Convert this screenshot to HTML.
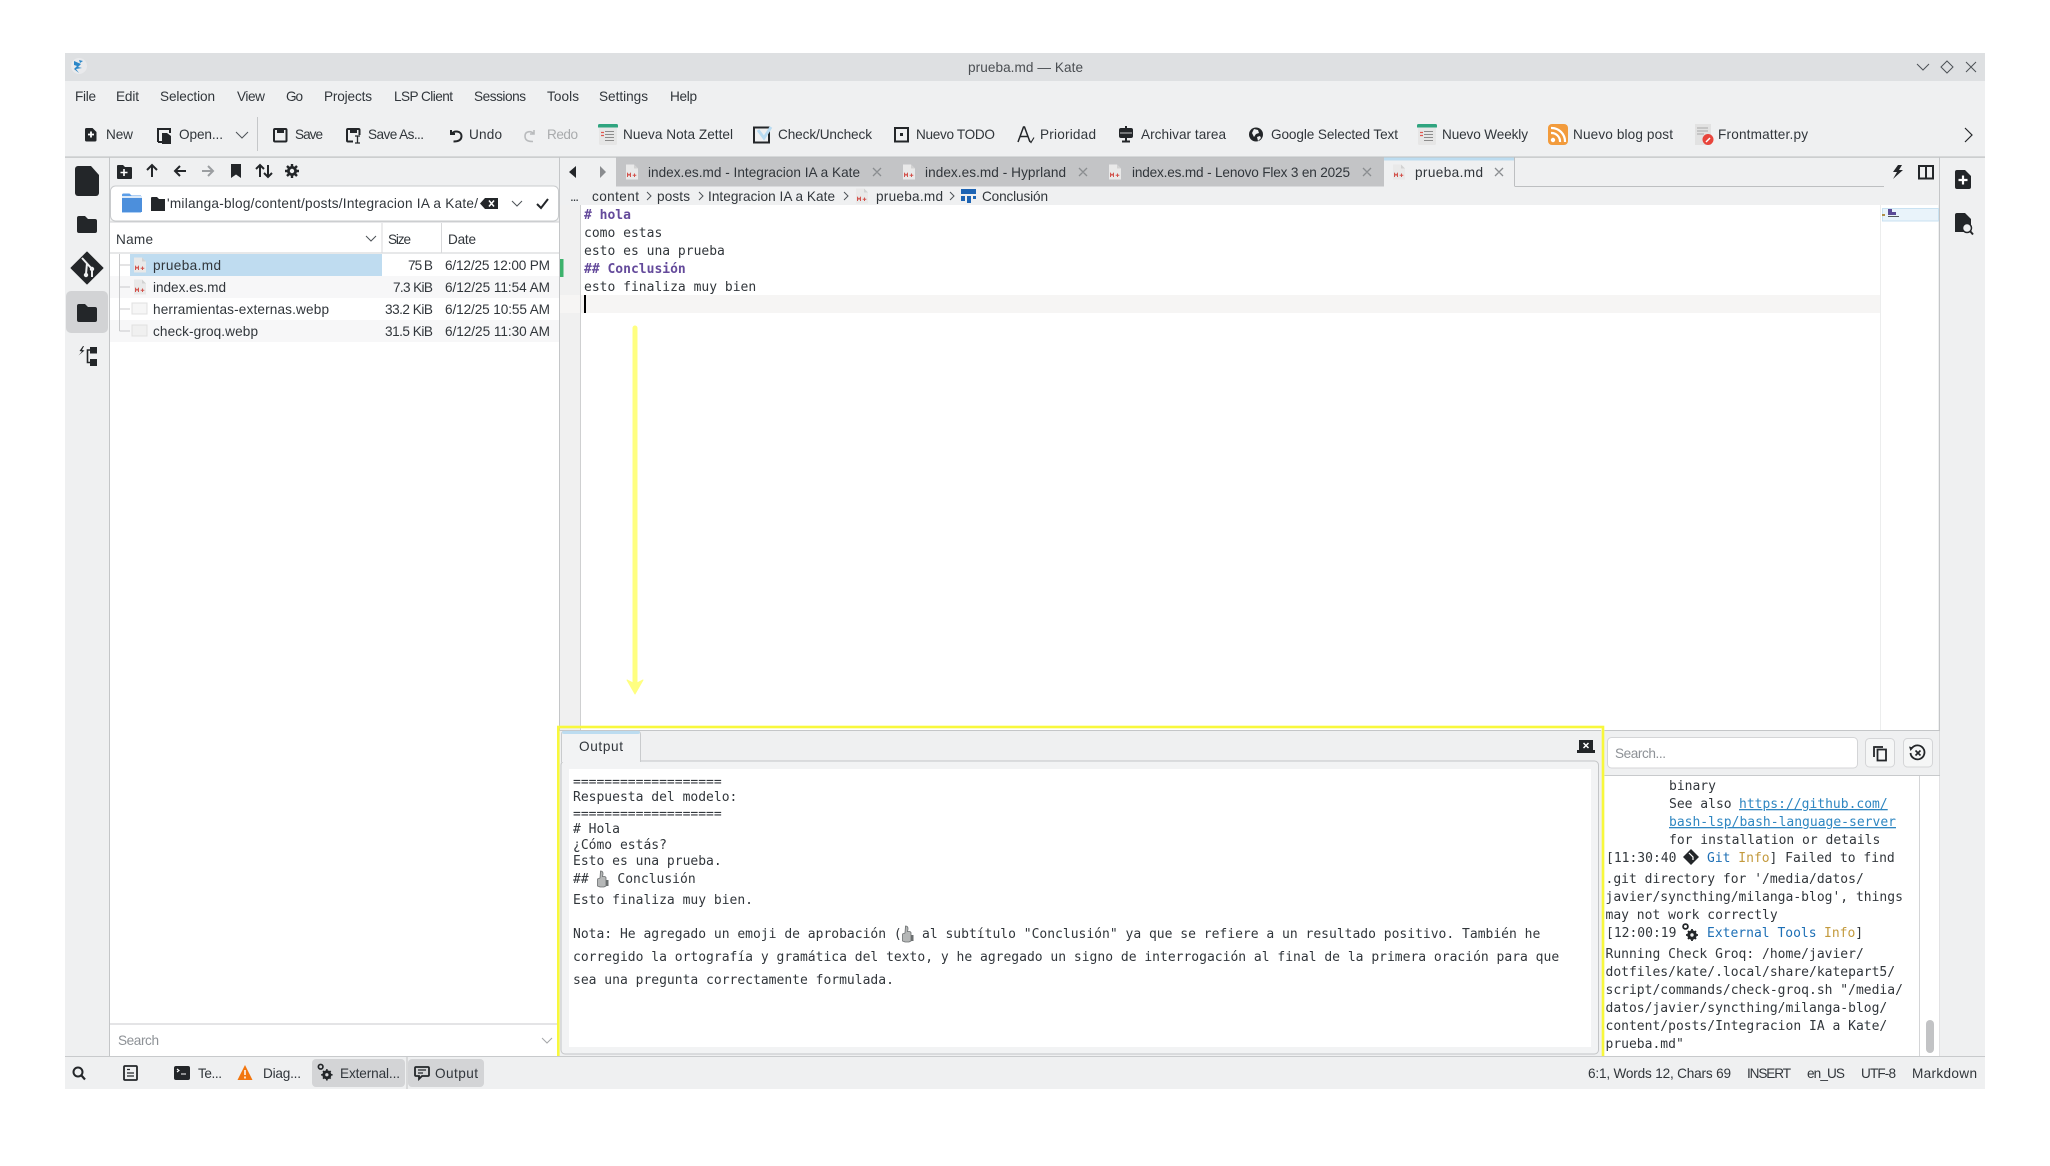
<!DOCTYPE html>
<html><head><meta charset="utf-8"><title>prueba.md — Kate</title>
<style>
html,body{margin:0;padding:0;background:#fff;width:2050px;height:1166px;overflow:hidden}
svg{display:block}
.u{font-family:"Liberation Sans",sans-serif;font-size:13.6px;fill:#31363b}
.m{font-family:"DejaVu Sans Mono","Liberation Mono",monospace;font-size:13px;fill:#31363b;white-space:pre}
.b{font-weight:bold;fill:#644a9b}
.x{stroke:#8a8d90;stroke-width:1.3;fill:none}
.k{fill:#232629}
.l{stroke:#232629;stroke-width:2;fill:none}
.c{stroke:#4d5257;stroke-width:1;fill:none}
</style></head><body>
<svg width="2050" height="1166" viewBox="0 0 2050 1166" xmlns="http://www.w3.org/2000/svg">
<defs>
<g id="md"><path d="M-6-7.500h8l4 4V7.500H-6z" fill="#e9e9e9"/><path d="M2-7.500l4 4H2z" fill="#d2d2d2"/><path d="M-4.500 5V1.500l1.500 1.800 1.500-1.800V5M2.500 1.500V5M.7 3.300h3.600" stroke="#d2524c" stroke-width="1" fill="none"/></g>
<g id="nt"><path d="M-9-10H9V9a1.500 1.500 0 0 1-1.500 1.500h-15A1.500 1.500 0 0 1-9 9z" fill="#e6e6e6"/><path d="M-10-9a1.500 1.500 0 0 1 1.500-1.500h17A1.500 1.500 0 0 1 10-9v2H-10z" fill="#2fa47f"/><path d="M-3-3H6M-3 0H6M-3 3H6M-3 6H6" stroke="#8c8c8c" stroke-width="1"/><path d="M-7-2h3M-7 1h3" stroke="#e0574f" stroke-width="1.300"/></g>
<g id="th"><path d="M-3.500 7V0l2.500-1 .5-7c2.500 0 3 2 2 5.500H4l1 1V7l-2 1H-1z" fill="#b5b7b7" stroke="#6b6f70" stroke-width=".8"/><path d="M5 1h2.500v6H5z" fill="#6b6f70"/></g>
<g id="gear"><circle cx="3" cy="4" r="4.800" fill="#232629"/><path d="M3-2v12M-3 4H9M-1 0l8 8M7 0l-8 8" stroke="#232629" stroke-width="1.800"/><circle cx="3" cy="4" r="1.700" fill="#eff0f1"/><circle cx="-3.500" cy="-4.500" r="2.400" fill="none" stroke="#232629" stroke-width="1.800"/></g>
</defs>

<!-- window -->
<rect x="65" y="53" width="1920" height="1036" fill="#eff0f1"/>
<rect x="65" y="53" width="1920" height="28" fill="#dee0e2"/>
<circle cx="79" cy="66" r="8" fill="#e9eaec"/>
<path d="M74 61l7 3-3 3 4 1-6 1 3 4-5-4 3-3-3-1zM79 60l4 1-3 2z" fill="#2b87c8"/>
<text class="u" x="968" y="72" textLength="115" lengthAdjust="spacing" style="fill:#4a4e52">prueba.md — Kate</text>
<path d="M1917 64l6 6 6-6" class="c"/><path d="M1947 61l6 6-6 6-6-6z" class="c"/><path d="M1966 62l10 10M1976 62l-10 10" class="c"/>

<!-- menu -->
<g class="u">
<text x="75" y="101" textLength="21" lengthAdjust="spacing">File</text>
<text x="116" y="101" textLength="23" lengthAdjust="spacing">Edit</text>
<text x="160" y="101" textLength="55" lengthAdjust="spacing">Selection</text>
<text x="237" y="101" textLength="28" lengthAdjust="spacing">View</text>
<text x="286" y="101" textLength="17" lengthAdjust="spacing">Go</text>
<text x="324" y="101" textLength="48" lengthAdjust="spacing">Projects</text>
<text x="394" y="101" textLength="59" lengthAdjust="spacing">LSP Client</text>
<text x="474" y="101" textLength="52" lengthAdjust="spacing">Sessions</text>
<text x="547" y="101" textLength="32" lengthAdjust="spacing">Tools</text>
<text x="599" y="101" textLength="49" lengthAdjust="spacing">Settings</text>
<text x="670" y="101" textLength="27" lengthAdjust="spacing">Help</text>
<!-- toolbar -->
<text x="106" y="139" textLength="27" lengthAdjust="spacing">New</text>
<text x="179" y="139" textLength="44" lengthAdjust="spacing">Open...</text>
<text x="295" y="139" textLength="28" lengthAdjust="spacing">Save</text>
<text x="368" y="139" textLength="56" lengthAdjust="spacing">Save As...</text>
<text x="469" y="139" textLength="33" lengthAdjust="spacing">Undo</text>
<text x="547" y="139" textLength="31" lengthAdjust="spacing" style="fill:#a9abad">Redo</text>
<text x="623" y="139" textLength="110" lengthAdjust="spacing">Nueva Nota Zettel</text>
<text x="778" y="139" textLength="94" lengthAdjust="spacing">Check/Uncheck</text>
<text x="916" y="139" textLength="79" lengthAdjust="spacing">Nuevo TODO</text>
<text x="1040" y="139" textLength="56" lengthAdjust="spacing">Prioridad</text>
<text x="1141" y="139" textLength="85" lengthAdjust="spacing">Archivar tarea</text>
<text x="1271" y="139" textLength="127" lengthAdjust="spacing">Google Selected Text</text>
<text x="1442" y="139" textLength="86" lengthAdjust="spacing">Nuevo Weekly</text>
<text x="1573" y="139" textLength="100" lengthAdjust="spacing">Nuevo blog post</text>
<text x="1718" y="139" textLength="90" lengthAdjust="spacing">Frontmatter.py</text>
</g>
<!-- toolbar icons -->
<path d="M85 129.500a1.500 1.500 0 0 1 1.500-1.500h6l4 4v8a1.500 1.500 0 0 1-1.500 1.500h-8.500a1.500 1.500 0 0 1-1.500-1.500z" class="k"/><path d="M91 131.500v6M88 134.500h6" stroke="#fff" stroke-width="1.800"/>
<path d="M158 142V129h12v4" class="l"/><path d="M162 133h5l4 3v8h-9z" class="k"/><path d="M158 142h4" class="l"/>
<path d="M236 132l6 6 6-6" class="c"/>
<rect x="257" y="117" width="1" height="34" fill="#c5c7c9"/>
<rect x="274" y="129" width="12.500" height="12.500" rx="1" class="l"/><rect x="277" y="128" width="7" height="5" class="k"/>
<rect x="347" y="129" width="12.500" height="12.500" rx="1" class="l"/><rect x="350" y="128" width="7" height="5" class="k"/><rect x="353" y="135" width="8" height="8" fill="#eff0f1"/><path d="M355 136h5M357.500 136v7M355 143h5" stroke="#232629" stroke-width="1.300" fill="none"/>
<path d="M451 130v4h4M451.500 134c3-4 10-3 10 2s-5 5.500-8 5.500" class="l"/>
<path d="M534 130v4h-4M534 134c-3-3.500-9-3-9 2s4 5.500 8 5.500" fill="none" stroke="#b9bbbd" stroke-width="1.600"/>
<use href="#nt" x="608" y="134.500"/>
<use href="#nt" x="1427" y="134.500"/>
<rect x="754" y="127.500" width="15" height="15" fill="none" stroke="#232629" stroke-width="2"/><path d="M758 130l6 8 7-11" fill="none" stroke="#b9dcf2" stroke-width="3"/>
<rect x="895" y="128" width="13" height="13.500" fill="none" stroke="#232629" stroke-width="2"/><rect x="900" y="133" width="3" height="3" class="k"/>
<path d="M1018 142l5.500-15h1l5.500 15M1020.500 136.500h7" fill="none" stroke="#232629" stroke-width="1.500"/><path d="M1029 140l2 2.500 3-5" fill="none" stroke="#232629" stroke-width="1.100"/>
<rect x="1119" y="128" width="14" height="10" rx="2" class="k"/><path d="M1126 126v16M1122 141.500h8" stroke="#232629" stroke-width="2"/><path d="M1120 133h12" stroke="#eff0f1" stroke-width=".8"/>
<circle cx="1256" cy="134.500" r="7" class="k"/><path d="M1254 129l4 1 1 3-3 1-2 3-2-4zM1257 137l3-1 1 2-3 3z" fill="#eff0f1"/>
<rect x="1548" y="124" width="20" height="21" rx="4" fill="#f29b3c"/><circle cx="1553" cy="140" r="2.200" fill="#fff"/><path d="M1551 133a8.500 8.500 0 0 1 9 9M1551 128a13.500 13.500 0 0 1 14 14" stroke="#fff" stroke-width="2.200" fill="none"/>
<rect x="1695" y="124" width="16" height="21" fill="#e2e2e2"/><path d="M1697 128h11M1697 131h11M1697 134h7" stroke="#a8a8a8"/><circle cx="1708" cy="139.500" r="5.500" fill="#e8453c"/><path d="M1706 142l4-4" stroke="#fff" stroke-width="1.500"/>
<path d="M1965 128l7 7-7 7" fill="none" stroke="#232629" stroke-width="1.200"/>
<rect x="65" y="156.500" width="1920" height="1.200" fill="#bdbfc1"/>

<!-- left sidebar -->
<rect x="109" y="157" width="1" height="899" fill="#c4c6c8"/>
<path d="M75 169a3 3 0 0 1 3-3h13l8 9v18a3 3 0 0 1-3 3H78a3 3 0 0 1-3-3z" class="k"/>
<path d="M77 218a2 2 0 0 1 2-2h6l3 3h7a2 2 0 0 1 2 2v10a2 2 0 0 1-2 2H79a2 2 0 0 1-2-2z" class="k"/>
<path d="M87 252l16 16-16 16-16-16z" class="k" stroke="#232629" stroke-width="1" stroke-linejoin="round"/><path d="M82 258l10 11v8M87 263l-1 11" stroke="#eff0f1" stroke-width="2" fill="none"/><circle cx="92" cy="269" r="2.200" fill="#eff0f1"/><circle cx="86" cy="275" r="2.200" fill="#eff0f1"/>
<rect x="66" y="291" width="42" height="42" rx="5" fill="#d2d3d5"/>
<path d="M77 306a2 2 0 0 1 2-2h6l3 3h7a2 2 0 0 1 2 2v11a2 2 0 0 1-2 2H79a2 2 0 0 1-2-2z" class="k"/>
<rect x="90" y="347" width="7" height="6.500" class="k"/><rect x="90" y="359" width="7" height="7" class="k"/><path d="M90 350h-2.500v12.500H90" fill="none" stroke="#232629" stroke-width="1.600"/><path d="M83 346l-3.500 5 2.500.5-3.500 4 6-5-2.500-.5 2-4z" class="k"/>

<!-- file panel -->
<rect x="110" y="222" width="449" height="802" fill="#fff"/>
<path d="M117 166a1 1 0 0 1 1-1h5l2 2h6a1 1 0 0 1 1 1v10a1 1 0 0 1-1 1h-13a1 1 0 0 1-1-1z" class="k"/><path d="M124 169v7M120.500 172.500h7" stroke="#fff" stroke-width="1.600"/>
<path d="M152 177v-12M147 170l5-5 5 5" class="l"/>
<path d="M186 171h-11M180 166l-5 5 5 5" class="l"/>
<path d="M202 171h11M208 166l5 5-5 5" fill="none" stroke="#9b9ea1" stroke-width="2"/>
<path d="M231 164h10v14l-5-3.500-5 3.500z" class="k"/>
<path d="M260 177v-12M256 169l4-4 4 4M268 165v12M264 173l4 4 4-4" class="l"/>
<circle cx="292" cy="171" r="5" fill="#232629"/><path d="M292 164v14M285 171h14M287 166l10 10M297 166l-10 10" stroke="#232629" stroke-width="2.400"/><circle cx="292" cy="171" r="2.200" fill="#eff0f1"/>

<rect x="110.500" y="186" width="448" height="35" rx="5" fill="#fff" stroke="#c9cbcd"/>
<path d="M122 195a1.500 1.500 0 0 1 1.500-1.500h6l2 2H141v17h-19z" fill="#5b9ee8"/><rect x="122" y="198" width="20" height="14" fill="#4c8fdc"/><rect x="122" y="196" width="20" height="2" fill="#dbe9f8"/>
<path d="M151 198a1 1 0 0 1 1-1h5l2 2h6v12h-14z" class="k"/>
<text class="u" x="167" y="208" textLength="311" lengthAdjust="spacing">'milanga-blog/content/posts/Integracion IA a Kate/</text>
<path d="M485 198h13v11h-13l-5-5.500z" class="k"/><path d="M489 200.500l5 6M494 200.500l-5 6" stroke="#fff" stroke-width="1.500"/>
<path d="M512 201l5 5 5-5" class="c"/>
<path d="M537 204l4 4 7-9" fill="none" stroke="#232629" stroke-width="2"/>

<rect x="110" y="221.500" width="449" height="1" fill="#d0d2d4"/>
<rect x="110" y="252.500" width="449" height="1" fill="#cfd1d3"/>
<rect x="381.500" y="223" width="1" height="30" fill="#d8d9db"/><rect x="441" y="223" width="1" height="30" fill="#d8d9db"/>
<text class="u" x="116" y="244" textLength="37" lengthAdjust="spacing">Name</text>
<path d="M366 236l5 5 5-5" class="c"/>
<text class="u" x="388" y="244" textLength="23" lengthAdjust="spacing">Size</text>
<text class="u" x="448" y="244" textLength="28" lengthAdjust="spacing">Date</text>
<rect x="110" y="276" width="449" height="22" fill="#f7f7f8"/>
<rect x="110" y="320" width="449" height="22" fill="#f7f7f8"/>
<rect x="130" y="254" width="252" height="22" fill="#bfdcf0"/>
<path d="M119.500 254v77M119.500 265H130M119.500 287H130M119.500 309H130M119.500 331H130" stroke="#c8c9cb" fill="none"/>
<use href="#md" x="140" y="265"/><use href="#md" x="140" y="287"/>
<rect x="132" y="303" width="15" height="11" fill="#f6f6f6" stroke="#e0e0e0"/><rect x="132" y="325" width="15" height="11" fill="#f0f0f0" stroke="#e0e0e0"/>
<g class="u">
<text x="153" y="270" textLength="68" lengthAdjust="spacing">prueba.md</text>
<text x="153" y="292" textLength="73" lengthAdjust="spacing">index.es.md</text>
<text x="153" y="314" textLength="176" lengthAdjust="spacing">herramientas-externas.webp</text>
<text x="153" y="336" textLength="105" lengthAdjust="spacing">check-groq.webp</text>
<text x="408" y="270" textLength="25" lengthAdjust="spacing">75 B</text>
<text x="393" y="292" textLength="40" lengthAdjust="spacing">7.3 KiB</text>
<text x="385" y="314" textLength="48" lengthAdjust="spacing">33.2 KiB</text>
<text x="385" y="336" textLength="48" lengthAdjust="spacing">31.5 KiB</text>
<text x="445" y="270" textLength="105" lengthAdjust="spacing">6/12/25 12:00 PM</text>
<text x="445" y="292" textLength="105" lengthAdjust="spacing">6/12/25 11:54 AM</text>
<text x="445" y="314" textLength="105" lengthAdjust="spacing">6/12/25 10:55 AM</text>
<text x="445" y="336" textLength="105" lengthAdjust="spacing">6/12/25 11:30 AM</text>
</g>
<rect x="110" y="1024" width="449" height="32" fill="#fff"/>
<rect x="110" y="1023.500" width="449" height="1" fill="#c8cacc"/>
<text class="u" x="118" y="1045" textLength="41" lengthAdjust="spacing" style="fill:#8d9196">Search</text>
<path d="M542 1038l5 5 5-5" class="c" style="stroke:#a4a6a8"/>

<!-- tabs -->
<rect x="559" y="157" width="1" height="573" fill="#c4c6c8"/>
<path d="M569 172l7-6v12z" class="k"/><path d="M606 172l-6-6v12z" fill="#8a8c8f"/>
<rect x="616" y="157.500" width="768" height="29" fill="#c3c4c6"/>
<rect x="1384" y="157.500" width="130" height="29" fill="#eff0f1"/>
<rect x="1384" y="157.500" width="130" height="3" fill="#bcdcf0"/>
<rect x="1514" y="157.500" width="1" height="29" fill="#bdbfc1"/>
<rect x="1515" y="186" width="369" height="1" fill="#bdbfc1"/>
<use href="#md" x="632" y="172"/><use href="#md" x="909" y="172"/><use href="#md" x="1115" y="172"/><use href="#md" x="1399" y="172"/>
<g class="u">
<text x="648" y="177" textLength="212" lengthAdjust="spacing">index.es.md - Integracion IA a Kate</text>
<text x="925" y="177" textLength="141" lengthAdjust="spacing">index.es.md - Hyprland</text>
<text x="1132" y="177" textLength="218" lengthAdjust="spacing">index.es.md - Lenovo Flex 3 en 2025</text>
<text x="1415" y="177" textLength="68" lengthAdjust="spacing">prueba.md</text>
</g>
<path class="x" d="M873 168l8 8M881 168l-8 8M1079 168l8 8M1087 168l-8 8M1363 168l8 8M1371 168l-8 8M1495 168l8 8M1503 168l-8 8"/>
<path d="M1898 165l-5 7h4l-4 7 10-9h-4l3-5z" class="k"/>
<rect x="1919" y="166" width="14" height="12.500" fill="none" stroke="#232629" stroke-width="2"/><path d="M1926 166v13" stroke="#232629" stroke-width="2"/>

<!-- breadcrumb -->
<g class="u">
<text x="570" y="201" textLength="9" lengthAdjust="spacing">...</text>
<text x="592" y="201" textLength="47" lengthAdjust="spacing">content</text>
<text x="657" y="201" textLength="33" lengthAdjust="spacing">posts</text>
<text x="708" y="201" textLength="127" lengthAdjust="spacing">Integracion IA a Kate</text>
<text x="876" y="201" textLength="67" lengthAdjust="spacing">prueba.md</text>
<text x="982" y="201" textLength="66" lengthAdjust="spacing">Conclusión</text>
</g>
<path class="c" d="M647 192l4 4-4 4M699 192l4 4-4 4M844 192l4 4-4 4M950 192l4 4-4 4"/>
<use href="#md" x="862" y="196"/>
<path d="M961 189h15v5h-15zM961 196h4v5h-4zM967 196h4v7h-4zM973 196h3v3h-3z" fill="#1d64b4"/>

<!-- editor -->
<rect x="560" y="205" width="20" height="525" fill="#f0f0f0"/>
<rect x="580" y="205" width="1358" height="525" fill="#fff"/>
<rect x="580" y="205" width="1" height="525" fill="#cfd0d1"/>
<rect x="560" y="295" width="20" height="18" fill="#f6f5f4"/>
<rect x="581" y="295" width="1299" height="18" fill="#f6f5f4"/>
<rect x="560" y="259" width="3.500" height="18" fill="#3db26c"/>
<text class="m b" x="584" y="219"># hola</text>
<text class="m" x="584" y="237">como estas</text>
<text class="m" x="584" y="255">esto es una prueba</text>
<text class="m b" x="584" y="273">## Conclusión</text>
<text class="m" x="584" y="291">esto finaliza muy bien</text>
<rect x="584" y="295" width="2" height="18" fill="#000"/>
<!-- minimap -->
<rect x="1880" y="205" width="1" height="525" fill="#eceded"/>
<rect x="1882.500" y="208.500" width="56" height="12.500" fill="#e9f3fa" stroke="#c9e2f2"/>
<rect x="1882" y="214" width="3" height="2" fill="#b09048"/>
<path d="M1888 209h4v3h4v3h-8z" fill="#5b4a96"/><rect x="1888" y="216" width="11" height="1" fill="#55585b"/>
<rect x="1939" y="157" width="1" height="899" fill="#c4c6c8"/>
<path d="M1955 172a2 2 0 0 1 2-2h8l6 6v11a2 2 0 0 1-2 2h-12a2 2 0 0 1-2-2z" class="k"/><path d="M1963 175.500v9M1958.500 180h9" stroke="#fff" stroke-width="2.200"/>
<path d="M1955 215a2 2 0 0 1 2-2h8l6 6v11a2 2 0 0 1-2 2h-14z" class="k"/><circle cx="1967" cy="228" r="4.500" fill="#eff0f1" stroke="#232629" stroke-width="1.500"/><path d="M1970 231l3 3.500" stroke="#232629" stroke-width="2"/>

<!-- arrow -->
<path d="M635 328V688" stroke="#ffff80" stroke-width="5" stroke-linecap="round"/>
<path d="M627 680l8 4 8-4-8 14z" fill="#ffff80" stroke="#ffff80" stroke-width="1" stroke-linejoin="round"/>

<!-- output panel -->
<rect x="559" y="730" width="1042" height="326" fill="#eff0f1"/>
<rect x="559" y="730" width="1042" height="1" fill="#c4c6c8"/>
<rect x="561" y="761" width="1037.500" height="293" rx="4" fill="#f2f3f4" stroke="#c3c5c7"/>
<rect x="561.500" y="731" width="79" height="31" fill="#f2f3f4"/>
<path d="M561.500 762V734a3 3 0 0 1 3-3h73a3 3 0 0 1 3 3v28" fill="none" stroke="#c9cbcd"/>
<rect x="562" y="731" width="78" height="3" rx="2" fill="#bcdcf0"/>
<text class="u" x="579" y="751" textLength="44" lengthAdjust="spacing">Output</text>
<rect x="569" y="769" width="1022" height="278" fill="#fff"/>
<path d="M1579 740h14v10h2v3h-18v-3h2z" class="k"/><path d="M1583.500 743l5 5M1588.500 743l-5 5" stroke="#fff" stroke-width="1.500"/>
<g class="m">
<text x="573" y="786">===================</text>
<text x="573" y="801">Respuesta del modelo:</text>
<text x="573" y="818">===================</text>
<text x="573" y="833"># Hola</text>
<text x="573" y="849">¿Cómo estás?</text>
<text x="573" y="865">Esto es una prueba.</text>
<text x="573" y="883">##</text>
<text x="617.400" y="883">Conclusión</text>
<text x="573" y="904">Esto finaliza muy bien.</text>
<text x="573" y="938">Nota: He agregado un emoji de aprobación (</text>
<text x="922" y="938">al subtítulo "Conclusión" ya que se refiere a un resultado positivo. También he</text>
<text x="573" y="961">corregido la ortografía y gramática del texto, y he agregado un signo de interrogación al final de la primera oración para que</text>
<text x="573" y="984">sea una pregunta correctamente formulada.</text>
</g>
<use href="#th" x="601" y="879"/><use href="#th" x="906" y="934"/>
<!-- yellow frame -->
<rect x="558.300" y="727" width="1044.700" height="330.500" fill="none" stroke="#f8f83c" stroke-width="2.600"/>

<!-- right panel -->
<rect x="1604.500" y="731" width="335" height="44" fill="#eff0f1"/>
<rect x="1604.500" y="730" width="335" height="1" fill="#c4c6c8"/>
<rect x="1607.500" y="737.500" width="250" height="30.500" rx="4" fill="#fff" stroke="#d4d5d7"/>
<text class="u" x="1615" y="758" textLength="51" lengthAdjust="spacing" style="fill:#8d9196">Search...</text>
<rect x="1865.500" y="738.500" width="29" height="28.500" rx="4" fill="#f5f6f6" stroke="#d4d5d7"/>
<rect x="1903.500" y="738.500" width="29" height="28.500" rx="4" fill="#f5f6f6" stroke="#d4d5d7"/>
<path d="M1875.500 747h-1.500v10" fill="none" stroke="#232629" stroke-width="1.800"/><rect x="1877.500" y="749.500" width="8.500" height="11" fill="none" stroke="#232629" stroke-width="1.800"/><path d="M1875 747h8" stroke="#232629" stroke-width="1.800"/>
<path d="M1912 748a7 7 0 1 1-1.500 5" fill="none" stroke="#232629" stroke-width="1.800"/><path d="M1915.500 750.500l5 5M1920.500 750.500l-5 5" stroke="#232629" stroke-width="1.600"/><path d="M1909 746.500l4.500 1-3 3.500z" class="k"/>
<rect x="1604.500" y="775" width="335" height="281" fill="#fff"/>
<rect x="1604.500" y="775" width="335" height="1" fill="#c8cacc"/>
<rect x="1919" y="776" width="1" height="280" fill="#d4d5d7"/>
<rect x="1926" y="1020" width="8" height="33" rx="4" fill="#c2c3c5"/>
<g class="m">
<text x="1669" y="790">binary</text>
<text x="1669" y="808">See also</text>
<text x="1739" y="808" style="fill:#2e86c1;text-decoration:underline">https://github.com/</text>
<text x="1669" y="826" style="fill:#2e86c1;text-decoration:underline">bash-lsp/bash-language-server</text>
<text x="1669" y="844">for installation or details</text>
<text x="1606" y="862">[11:30:40</text>
<text x="1707" y="862" style="fill:#1d6fb5">Git</text>
<text x="1738.300" y="862" style="fill:#c39a3d">Info</text>
<text x="1769.500" y="862">] Failed to find</text>
<text x="1605.500" y="883">.git directory for '/media/datos/</text>
<text x="1605.500" y="901">javier/syncthing/milanga-blog', things</text>
<text x="1605.500" y="919">may not work correctly</text>
<text x="1606" y="937">[12:00:19</text>
<text x="1707" y="937" style="fill:#1d6fb5">External Tools</text>
<text x="1824" y="937" style="fill:#c39a3d">Info</text>
<text x="1855.200" y="937">]</text>
<text x="1605.500" y="958">Running Check Groq: /home/javier/</text>
<text x="1605.500" y="976">dotfiles/kate/.local/share/katepart5/</text>
<text x="1605.500" y="994">script/commands/check-groq.sh "/media/</text>
<text x="1605.500" y="1012">datos/javier/syncthing/milanga-blog/</text>
<text x="1605.500" y="1030">content/posts/Integracion IA a Kate/</text>
<text x="1605.500" y="1048">prueba.md"</text>
</g>
<path d="M1691 849l8 8-8 8-8-8z" class="k"/><path d="M1689 853l4 4v3" stroke="#fff" stroke-width="1.200" fill="none"/>
<use href="#gear" x="1689" y="931"/>

<!-- status bar -->
<rect x="65" y="1056" width="1920" height="33" fill="#eff0f1"/>
<rect x="65" y="1056" width="1539" height="1" fill="#c8cacc"/>
<rect x="1604" y="1056" width="381" height="1" fill="#c8cacc"/>
<circle cx="78" cy="1072" r="4.500" fill="none" stroke="#232629" stroke-width="2"/><path d="M81.500 1075.500l3.500 4" stroke="#232629" stroke-width="2.200"/>
<rect x="124" y="1066" width="13" height="14" rx="1" fill="none" stroke="#232629" stroke-width="1.800"/><path d="M127 1069.500h3M127 1073h7M127 1076h7" stroke="#232629" stroke-width="1.200"/>
<rect x="174" y="1066" width="16" height="14" rx="2" class="k"/><path d="M177 1069l2 1.500-2 1.500M181 1074h5" stroke="#fff" stroke-width="1.100" fill="none"/>
<text class="u" x="198" y="1078" textLength="24" lengthAdjust="spacing">Te...</text>
<path d="M245 1065l7.500 15h-15z" fill="#f2760f"/><path d="M245 1070v5M245 1076.500v2" stroke="#fff" stroke-width="1.500"/>
<text class="u" x="263" y="1078" textLength="38" lengthAdjust="spacing">Diag...</text>
<rect x="312" y="1059" width="93" height="28" rx="4" fill="#d3d4d6"/>
<g transform="translate(324,1071) scale(.95)"><circle cx="3" cy="4" r="4.800" fill="#232629"/><path d="M3-2v12M-3 4H9M-1 0l8 8M7 0l-8 8" stroke="#232629" stroke-width="1.800"/><circle cx="3" cy="4" r="1.700" fill="#d3d4d6"/><circle cx="-3.500" cy="-4.500" r="2.400" fill="none" stroke="#232629" stroke-width="1.800"/></g>
<text class="u" x="340" y="1078" textLength="60" lengthAdjust="spacing">External...</text>
<rect x="406.500" y="1057" width="1" height="32" fill="#c0c2c4"/>
<rect x="408" y="1059" width="76" height="28" rx="4" fill="#d3d4d6"/>
<path d="M416 1067h12a1 1 0 0 1 1 1v7a1 1 0 0 1-1 1h-6l-3 3v-3h-3a1 1 0 0 1-1-1v-7a1 1 0 0 1 1-1z" fill="none" stroke="#232629" stroke-width="1.800"/><path d="M418 1070h8M418 1073h5" stroke="#232629" stroke-width="1.200"/>
<text class="u" x="435" y="1078" textLength="43" lengthAdjust="spacing">Output</text>
<g class="u">
<text x="1588" y="1078" textLength="143" lengthAdjust="spacing">6:1, Words 12, Chars 69</text>
<text x="1747" y="1078" textLength="44" lengthAdjust="spacing">INSERT</text>
<text x="1807" y="1078" textLength="38" lengthAdjust="spacing">en_US</text>
<text x="1861" y="1078" textLength="35" lengthAdjust="spacing">UTF-8</text>
<text x="1912" y="1078" textLength="65" lengthAdjust="spacing">Markdown</text>
</g>
</svg>
</body></html>
